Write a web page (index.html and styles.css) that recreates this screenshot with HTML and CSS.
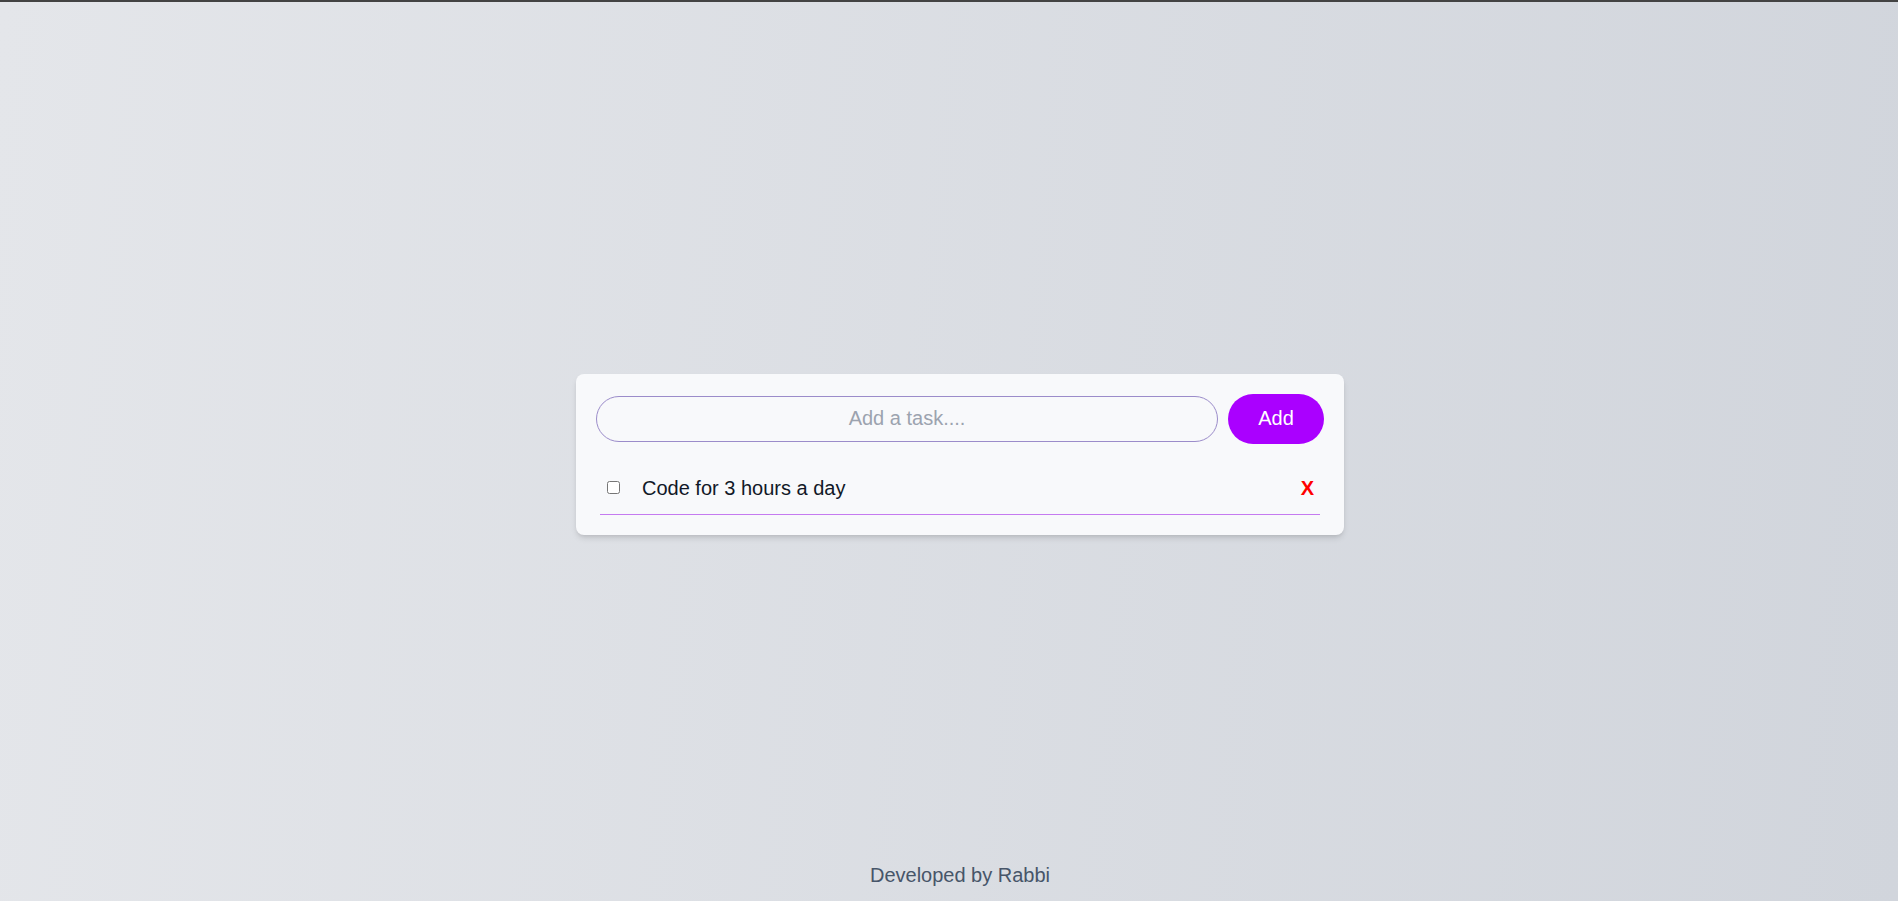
FILE: index.html
```html
<!DOCTYPE html>
<html lang="en">
<head>
<meta charset="UTF-8">
<title>Todo</title>
<link rel="stylesheet" href="styles.css">
</head>
<body>
  <main class="main">
    <div class="card">
      <form class="add-form" onsubmit="return false">
        <input class="task-input" type="text" placeholder="Add a task....">
        <button class="add-btn" type="submit">Add</button>
      </form>
      <ul class="task-list">
        <li class="task">
          <input class="task-check" type="checkbox">
          <span class="task-text">Code for 3 hours a day</span>
          <button class="delete-btn" type="button">X</button>
        </li>
      </ul>
    </div>
  </main>
  <footer class="footer">Developed by Rabbi</footer>
</body>
</html>
```

FILE: styles.css
```css
* { box-sizing: border-box; }

html, body {
  margin: 0;
  padding: 0;
}

html {
  height: 100%;
  overflow: hidden;
}

body {
  height: 100vh;
  overflow: hidden;
  display: flex;
  flex-direction: column;
  border-top: 2px solid #434343;
  background: linear-gradient(95deg, #e4e6ea 0%, #d1d5dc 100%);
  font-family: "Liberation Sans", Arial, sans-serif;
  color: #111827;
}

.main {
  flex: 1;
  display: flex;
  align-items: center;
  justify-content: center;
  padding-left: 22px;
  padding-top: 45px;
}

.card {
  width: 768px;
  background: #f8f9fb;
  border-radius: 8px;
  padding: 20px;
  box-shadow: 0 4px 6px -1px rgba(0,0,0,0.12), 0 2px 4px -2px rgba(0,0,0,0.1);
}

.add-form {
  display: flex;
  align-items: center;
  gap: 10px;
  margin: 0;
}

.task-input {
  flex: 1;
  height: 46px;
  border: 1px solid #9b8cca;
  border-radius: 9999px;
  background: transparent;
  font-family: "Liberation Sans", Arial, sans-serif;
  font-size: 20px;
  text-align: center;
  color: #111827;
  outline: none;
  padding: 0 16px;
}

.task-input::placeholder {
  color: #9ca3af;
}

.add-btn {
  width: 96px;
  height: 50px;
  border: none;
  border-radius: 9999px;
  background: #aa00ff;
  color: #ffffff;
  font-family: "Liberation Sans", Arial, sans-serif;
  font-size: 20px;
  cursor: pointer;
}

.task-list {
  list-style: none;
  margin: 20px 4px 0;
  padding: 0;
}

.task {
  display: flex;
  align-items: center;
  padding: 10px 6px 12px 3px;
  border-bottom: 1px solid #c57bf0;
  line-height: 28px;
}

.task-check {
  width: 13px;
  height: 13px;
  margin: 0 3px 0 4px;
}

.task-text {
  flex: 1;
  margin-left: 19px;
  font-size: 20px;
  color: #111827;
}

.delete-btn {
  border: none;
  background: transparent;
  padding: 0;
  color: #ff0000;
  font-family: "Liberation Sans", Arial, sans-serif;
  font-weight: bold;
  font-size: 20px;
  line-height: 28px;
  cursor: pointer;
}

.footer {
  text-align: center;
  padding-left: 22px;
  padding-bottom: 12px;
  font-size: 20px;
  line-height: 28px;
  color: #475569;
}
```
